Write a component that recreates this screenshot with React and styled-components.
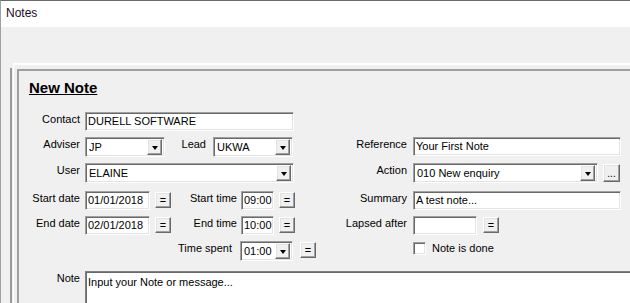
import React from 'react';
import styled, { createGlobalStyle, css } from 'styled-components';

const Global = createGlobalStyle`
  html, body { margin: 0; padding: 0; background: #fff; overflow: hidden; }
  body { font-family: "Liberation Sans", Arial, sans-serif; font-size: 11px; color: #000; }
`;

const sunken = css`
  box-sizing: border-box;
  border: 1px solid;
  border-color: #a0a0a0 #fff #fff #a0a0a0;
  box-shadow: inset 1px 1px 0 #696969, inset -1px -1px 0 #e3e3e3;
  background: #fff;
`;

const raised = css`
  box-sizing: border-box;
  border: 1px solid;
  border-color: #fff #696969 #696969 #fff;
  box-shadow: inset -1px -1px 0 #a0a0a0, inset 1px 1px 0 #e3e3e3;
  background: #f0f0f0;
`;

const Window = styled.div`
  width: 630px;
  height: 303px;
  box-sizing: border-box;
  overflow: hidden;
  border-top: 1px solid #6a6a6a;
  border-left: 1px solid #a0a0a0;
  background: #f0f0f0;
  display: flex;
  flex-direction: column;
`;

const TitleBar = styled.div`
  flex: none;
  height: 26px;
  background: #fff;
  padding-left: 5px;
  font-size: 12px;
  line-height: 24px;
  color: #1a0a2a;
`;

const ToolStrip = styled.div`
  flex: none;
  height: 36px;
`;

const OuterFrame = styled.div`
  margin-left: 9px;
  width: 700px;
  padding-left: 3px;
  background: linear-gradient(#9a9a9a, #9a9a9a) no-repeat 0 5px / 2px 100%;
`;

const EtchedFrame = styled.div`
  border-top: 2px solid #fff;
  border-left: 1px solid #fff;
  padding: 4px 0 0 3px;
`;

const Panel = styled.div`
  border-top: 2px solid #a0a0a0;
  border-left: 2px solid #a0a0a0;
  padding: 8px 0 0 10px;
  height: 260px;
`;

const Heading = styled.div`
  font-size: 15px;
  font-weight: bold;
  line-height: 18px;
  text-decoration: underline;
  margin-bottom: 15px;
`;

const Form = styled.div`
  display: grid;
  grid-template-columns: 56px 235px 93px 280px;
  grid-template-rows: 25px 26px 28px 25px 25px 30px 60px;
  align-items: start;
`;

const Label = styled.div`
  text-align: right;
  padding-right: ${(p) => p.$pr ?? 5}px;
  width: ${(p) => (p.$w ? `${p.$w}px` : 'auto')};
  box-sizing: border-box;
  flex: none;
  line-height: 15px;
  white-space: nowrap;
`;

const Row = styled.div`
  display: flex;
  align-items: flex-start;
  gap: ${(p) => p.$gap ?? 0}px;
  grid-column: ${(p) => p.$span || 'auto'};
`;

const TextBox = styled.div`
  ${sunken};
  flex: none;
  width: ${(p) => p.$w}px;
  height: 19px;
  padding: 1px 2px 0 2px;
  line-height: 15px;
  white-space: nowrap;
  overflow: hidden;
`;

const ComboBox = styled.div`
  ${sunken};
  flex: none;
  width: ${(p) => p.$w}px;
  height: 20px;
  display: flex;
  align-items: center;
  padding: 2px;
`;

const ComboText = styled.span`
  flex: 1;
  padding-left: 1px;
  line-height: 15px;
  white-space: nowrap;
  overflow: hidden;
`;

const DropButton = styled.span`
  ${raised};
  flex: none;
  width: 15px;
  height: 16px;
  display: flex;
  align-items: center;
  justify-content: center;
  &::after {
    content: '';
    border-left: 3.5px solid transparent;
    border-right: 3.5px solid transparent;
    border-top: 4px solid #000;
    margin-top: 1px;
  }
`;

const SmallButton = styled.div`
  ${raised};
  flex: none;
  width: ${(p) => p.$w ?? 16}px;
  height: ${(p) => p.$h ?? 16}px;
  margin-top: ${(p) => p.$mt ?? 1}px;
  display: flex;
  align-items: center;
  justify-content: center;
  font-size: 11px;
  line-height: 11px;
  padding-bottom: ${(p) => p.$pb ?? 0}px;
`;

const DotsButton = styled(SmallButton)`
  align-items: flex-end;
  padding-bottom: 3px;
  font-size: 10px;
  line-height: 8px;
  letter-spacing: 0;
`;

const CheckRow = styled.label`
  display: flex;
  align-items: center;
  gap: 6px;
  margin-top: 1px;
  line-height: 13px;
`;

const CheckBox = styled.span`
  ${sunken};
  width: 13px;
  height: 13px;
  flex: none;
`;

const NoteArea = styled.div`
  ${sunken};
  grid-column: 2 / -1;
  height: 60px;
  padding: 3px 2px 0 2px;
  line-height: 15px;
  border-top-color: #808080;
  border-left-color: #808080;
`;

export default function App() {
  return (
    <>
      <Global />
      <Window>
        <TitleBar>Notes</TitleBar>
        <ToolStrip />
        <OuterFrame>
          <EtchedFrame>
            <Panel>
              <Heading>New Note</Heading>
              <Form>
                {/* Row 1 */}
                <Label>Contact</Label>
                <Row>
                  <TextBox $w={209}>DURELL SOFTWARE</TextBox>
                </Row>
                <div />
                <div />

                {/* Row 2 */}
                <Label>Adviser</Label>
                <Row>
                  <ComboBox $w={80}>
                    <ComboText>JP</ComboText>
                    <DropButton />
                  </ComboBox>
                  <Label $w={48} $pr={7}>Lead</Label>
                  <ComboBox $w={80}>
                    <ComboText>UKWA</ComboText>
                    <DropButton />
                  </ComboBox>
                </Row>
                <Label $pr={6}>Reference</Label>
                <Row>
                  <TextBox $w={208}>Your First Note</TextBox>
                </Row>

                {/* Row 3 */}
                <Label>User</Label>
                <Row>
                  <ComboBox $w={209}>
                    <ComboText>ELAINE</ComboText>
                    <DropButton />
                  </ComboBox>
                </Row>
                <Label $pr={6}>Action</Label>
                <Row $gap={5}>
                  <ComboBox $w={185}>
                    <ComboText>010 New enquiry</ComboText>
                    <DropButton />
                  </ComboBox>
                  <DotsButton $w={17} $h={18}>...</DotsButton>
                </Row>

                {/* Row 4 */}
                <Label>Start date</Label>
                <Row>
                  <TextBox $w={65}>01/01/2018</TextBox>
                  <SmallButton style={{ marginLeft: 5 }}>=</SmallButton>
                  <Label $w={70} $pr={4}>Start time</Label>
                  <TextBox $w={33}>09:00</TextBox>
                  <SmallButton style={{ marginLeft: 5 }}>=</SmallButton>
                </Row>
                <Label $pr={6}>Summary</Label>
                <Row>
                  <TextBox $w={208}>A test note...</TextBox>
                </Row>

                {/* Row 5 */}
                <Label>End date</Label>
                <Row>
                  <TextBox $w={65}>02/01/2018</TextBox>
                  <SmallButton style={{ marginLeft: 5 }}>=</SmallButton>
                  <Label $w={70} $pr={4}>End time</Label>
                  <TextBox $w={33}>10:00</TextBox>
                  <SmallButton style={{ marginLeft: 5 }}>=</SmallButton>
                </Row>
                <Label $pr={6}>Lapsed after</Label>
                <Row $gap={6}>
                  <TextBox $w={64} />
                  <SmallButton>=</SmallButton>
                </Row>

                {/* Row 6 */}
                <div />
                <Row>
                  <Label $w={155} $pr={8}>Time spent</Label>
                  <ComboBox $w={53}>
                    <ComboText>01:00</ComboText>
                    <DropButton />
                  </ComboBox>
                  <SmallButton style={{ marginLeft: 7 }}>=</SmallButton>
                </Row>
                <div />
                <Row>
                  <CheckRow>
                    <CheckBox />
                    Note is done
                  </CheckRow>
                </Row>

                {/* Row 7 */}
                <Label>Note</Label>
                <NoteArea>Input your Note or message...</NoteArea>
              </Form>
            </Panel>
          </EtchedFrame>
        </OuterFrame>
      </Window>
    </>
  );
}
